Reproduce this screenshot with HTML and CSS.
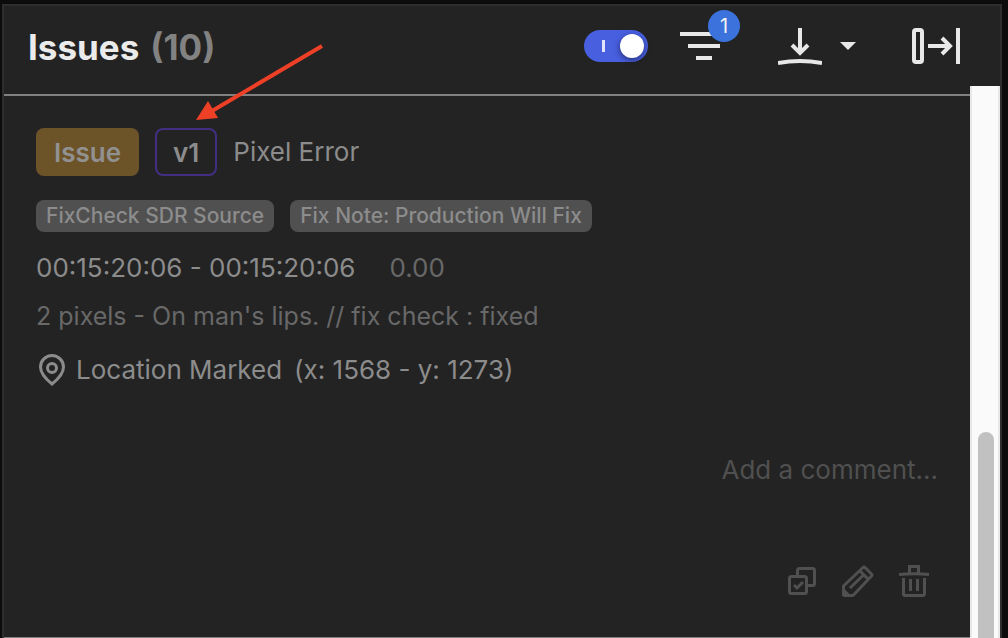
FILE: index.html
```html
<!DOCTYPE html>
<html lang="en">

<head>
  <meta charset="UTF-8" />
  <meta name="viewport" content="width=device-width, initial-scale=1.0" />
  <title>Issues</title>
  <link rel="stylesheet" href="styles.css">
</head>

<body>
  <main class="panel">
    <header class="panel-header">
      <h1>Issues <span class="count">(10)</span></h1>
      <div class="toolbar">
        <input type="checkbox" class="switch" aria-label="Show issues" checked>
        <button class="tool filter" aria-label="Filter">
          <svg width="40" height="32" viewBox="0 0 40 32" fill="currentColor">
            <path d="M0 2h40v4H0zM8 14h32v4H8zM16 26h16v4H16z" />
          </svg>
          <span class="badge">1</span>
        </button>
        <button class="tool download" aria-label="Download">
          <svg width="44" height="40" viewBox="0 0 44 40" fill="none" stroke="currentColor" stroke-width="4">
            <path d="M22 2v25M14 19l8 8 8-8" />
            <path d="M0 37Q22 33 44 37" />
          </svg>
        </button>
        <button class="tool more" aria-label="Download options">
          <svg width="16" height="8" viewBox="0 0 16 8" fill="currentColor">
            <path d="M0 0h16L8 8z" />
          </svg>
        </button>
        <button class="tool collapse" aria-label="Collapse panel">
          <svg width="48" height="36" viewBox="0 0 48 36" fill="none" stroke="currentColor" stroke-width="4">
            <rect x="2" y="2" width="8" height="32" rx="2" />
            <path d="M16 18h22M30 10l8 8-8 8M46 0v36" />
          </svg>
        </button>
      </div>
    </header>

    <div class="panel-body">
      <section class="list">
        <article class="issue">
          <div class="row">
            <span class="tag tag-issue">Issue</span>
            <span class="tag tag-version">v1</span>
            <span>Pixel Error</span>
          </div>
          <div class="row chips">
            <span class="chip">FixCheck SDR Source</span>
            <span class="chip">Fix Note: Production Will Fix</span>
          </div>
          <div class="row time">
            <span>00:15:20:06 - 00:15:20:06</span>
            <span class="dim">0.00</span>
          </div>
          <p class="note dim">2 pixels - On man's lips. // fix check : fixed</p>
          <div class="row location">
            <svg width="32" height="32" viewBox="0 0 32 32" fill="none" stroke="currentColor" stroke-width="3">
              <path d="M16 30C11 26 4.500 20 4.500 13a11.500 11.500 0 0 1 23 0c0 7-6.500 13-11.500 17z" />
              <circle cx="16" cy="14" r="4.500" />
            </svg>
            <span>Location Marked</span>
            <span class="coords">(x: 1568 - y: 1273)</span>
          </div>
          <input type="text" class="comment" placeholder="Add a comment..." aria-label="Add a comment">
          <div class="actions">
            <button class="tool" aria-label="Select issue">
              <svg width="32" height="32" viewBox="0 0 32 32" fill="none" stroke="currentColor" stroke-width="3">
                <path d="M11.500 11V5.500a2 2 0 0 1 2-2h13a2 2 0 0 1 2 2v13a2 2 0 0 1-2 2H21" />
                <rect x="3.500" y="11.500" width="17" height="17" rx="2" />
                <path d="M8 20l3 3 6-6" />
              </svg>
            </button>
            <button class="tool" aria-label="Edit issue">
              <svg width="32" height="32" viewBox="0 0 32 32" fill="none" stroke="currentColor" stroke-width="3" stroke-linejoin="round">
                <path d="M1.500 21L21 2.500a1.500 1.500 0 0 1 2 0L29.500 9a1.500 1.500 0 0 1 0 2L11 30.500H3a1.500 1.500 0 0 1-1.500-1.500z" />
                <path d="M18 6l8 8M8 23L21 10.500" />
                <path d="M1.500 25l5 5H2z" fill="currentColor" />
              </svg>
            </button>
            <button class="tool" aria-label="Delete issue">
              <svg width="32" height="32" viewBox="0 0 32 32" fill="none" stroke="currentColor" stroke-width="3">
                <path d="M1 9.500q15-1.500 30 0M11.500 8V1.500h9V8" />
                <path d="M5.500 13v16a1.500 1.500 0 0 0 1.500 1.500h18a1.500 1.500 0 0 0 1.500-1.500V13M12.500 14v12M19.500 14v12" />
              </svg>
            </button>
          </div>
        </article>
      </section>
      <div class="scrollbar">
        <div class="thumb"></div>
      </div>
    </div>

    <svg class="pointer" width="128" height="80" viewBox="0 0 128 80">
      <path d="M126 2L16 67" stroke="#ee4027" stroke-width="4" />
      <path d="M0 76l12-19 10 17z" fill="#ee4027" />
    </svg>
  </main>
</body>

</html>
```
FILE: styles.css
```css
* {
  box-sizing: border-box;
}

body {
  margin: 0;
  padding: 4px 6px 0 2px;
  background-color: #0c0c0c;
  font-family: Inter, sans-serif;
  font-size: 26px;
  line-height: 32px;
  color: #8c8c8c;
}

.panel {
  position: relative;
  display: flex;
  flex-direction: column;
  min-height: calc(100vh - 4px);
  border: 2px solid #2e2e2e;
  border-bottom: none;
  background-color: #232323;
}

.panel-header {
  display: flex;
  align-items: center;
  justify-content: space-between;
  height: 80px;
  padding: 0 40px 0 24px;
}

h1 {
  display: flex;
  gap: 11px;
  margin: 0;
  padding-top: 2px;
  font-size: 35px;
  line-height: 40px;
  font-weight: 700;
  color: #ebebeb;
}

.count {
  color: #828282;
}

.toolbar {
  display: flex;
  align-items: center;
  color: #e8e8e8;
}

.tool {
  display: flex;
  position: relative;
  padding: 0;
  border: none;
  background: none;
  color: inherit;
  cursor: pointer;
}

.switch {
  appearance: none;
  display: flex;
  align-items: center;
  justify-content: space-between;
  width: 64px;
  height: 32px;
  margin: 0;
  padding: 0 4px 0 18px;
  border-radius: 16px;
  background-color: #485fe0;
  cursor: pointer;
}

.switch::before {
  content: "";
  width: 3px;
  height: 12px;
  background-color: #dfe3fb;
}

.switch::after {
  content: "";
  width: 24px;
  height: 24px;
  border-radius: 50%;
  background-color: #fff;
  box-shadow: 0 2px 6px rgba(0, 0, 0, 0.5);
}

.filter {
  margin-left: 32px;
}

.badge {
  position: absolute;
  top: -20px;
  right: -20px;
  width: 32px;
  height: 32px;
  border-radius: 50%;
  background-color: #3b72db;
  font-family: Inter, sans-serif;
  font-size: 20px;
  line-height: 32px;
  text-align: center;
  color: #f2f2f2;
}

.download {
  margin-left: 58px;
}

.more {
  margin-left: 18px;
}

.collapse {
  margin-left: 56px;
}

.panel-body {
  display: flex;
  flex: 1;
}

.list {
  flex: 1;
  margin-top: 8px;
  border-top: 2px solid #808080;
}

.issue {
  padding: 32px 32px 40px;
  border-bottom: 1px solid #808080;
}

.row {
  display: flex;
  align-items: center;
}

.tag {
  height: 48px;
  margin-right: 16px;
  padding: 0 16px;
  border: 2px solid transparent;
  border-radius: 8px;
  line-height: 46px;
  font-weight: 600;
}

.tag-issue {
  background-color: #6d5328;
  color: #919191;
}

.tag-version {
  border-color: #422f82;
}

.chips {
  gap: 16px;
  margin-top: 24px;
}

.chip {
  padding: 0 10px;
  border-radius: 8px;
  background-color: #505050;
  font-size: 21px;
  font-weight: 500;
}

.time {
  gap: 34px;
  margin-top: 20px;
}

.dim {
  color: #686868;
}

.note {
  margin: 16px 0 0;
  font-size: 25px;
}

.location {
  margin-top: 22px;
}

.location span {
  margin-left: 8px;
}

.location .coords {
  margin-left: 12px;
}

.comment {
  display: block;
  width: 100%;
  margin-top: 68px;
  padding: 0;
  border: none;
  outline: none;
  background: none;
  font: inherit;
  text-align: right;
  color: inherit;
}

.comment::placeholder {
  color: #505050;
  opacity: 1;
}

.actions {
  display: flex;
  justify-content: flex-end;
  gap: 24px;
  margin-top: 79px;
  padding-right: 8px;
  color: #505050;
}

.scrollbar {
  display: flex;
  width: 30px;
  padding: 346px 4px 0 6px;
  border: solid #e8e8e8;
  border-width: 0 2px;
  background-color: #fafafa;
}

.thumb {
  flex: 1;
  border-radius: 8px 8px 0 0;
  background-color: #c1c1c1;
}

/* red arrow that points at the version tag */
.pointer {
  position: absolute;
  top: 38px;
  left: 192px;
  pointer-events: none;
}
```
